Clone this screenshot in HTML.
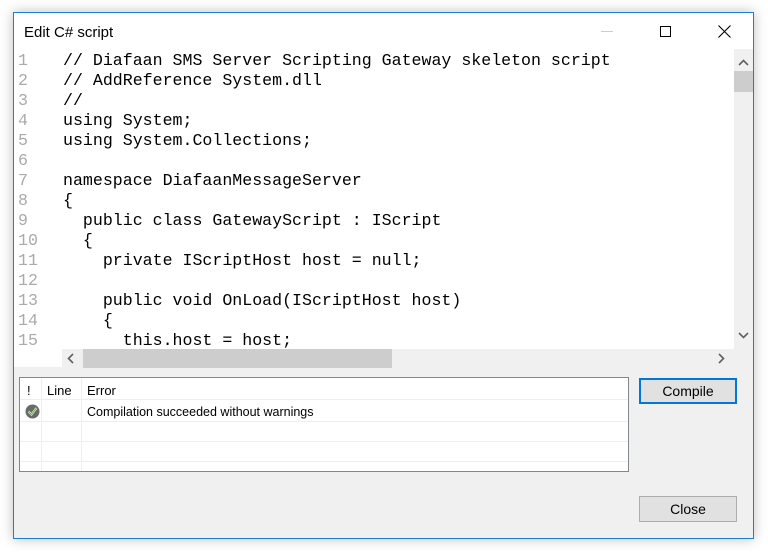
<!DOCTYPE html>
<html><head><style>
*{margin:0;padding:0;box-sizing:border-box}
body{width:768px;height:554px;background:#fff;position:relative;overflow:hidden;font-family:"Liberation Sans",sans-serif}
.win{position:absolute;left:13px;top:12px;width:741px;height:527px;background:#f0f0f0;border:1px solid #1a7fd4;box-shadow:0 0 12px rgba(0,0,0,.25)}
.title{position:absolute;left:0;top:0;width:739px;height:36px;background:#fff}
.title span{position:absolute;left:10px;top:11px;font-size:15px;color:#000}
.ed{position:absolute;left:0;top:36px;width:739px;height:318px;background:#fff;overflow:hidden}
.code{position:absolute;left:0;top:2px;font-family:"Liberation Mono",monospace;font-size:16.6px;line-height:20px;white-space:pre;color:#000}
.ln{position:absolute;left:4px;top:2px;font-family:"Liberation Mono",monospace;font-size:16.6px;line-height:20px;color:#aaa;white-space:pre}
.vs{position:absolute;left:720px;top:36px;width:19px;height:300px;background:#f0f0f0}
.hs{position:absolute;left:48px;top:336px;width:691px;height:19px;background:#f0f0f0}
.grid{position:absolute;left:5px;top:364px;width:610px;height:95px;background:#fff;border:1px solid #828790;font-size:13px}
.btn{position:absolute;left:625px;width:98px;height:26px;background:#e1e1e1;border:1px solid #adadad;font-size:14px;text-align:center;line-height:24px}
</style></head><body>
<div class="win">
<div class="title"><span>Edit C# script</span>
<div style="position:absolute;left:587px;top:18px;width:12px;height:1px;background:#ccc"></div>
<div style="position:absolute;left:646px;top:13px;width:11px;height:11px;border:1px solid #000"></div>
<svg style="position:absolute;left:704px;top:12px" width="13" height="13"><path d="M0.5 0.5L12.5 12.5M12.5 0.5L0.5 12.5" stroke="#000" stroke-width="1.1"/></svg>
</div>
<div class="ed">
<div class="ln">1
2
3
4
5
6
7
8
9
10
11
12
13
14
15</div>
<div class="code" style="left:49px">// Diafaan SMS Server Scripting Gateway skeleton script
// AddReference System.dll
//
using System;
using System.Collections;

namespace DiafaanMessageServer
{
  public class GatewayScript : IScript
  {
    private IScriptHost host = null;

    public void OnLoad(IScriptHost host)
    {
      this.host = host;</div>
</div>
<div class="vs">
<svg style="position:absolute;left:4px;top:10px" width="11" height="7"><path d="M1 6L5.5 1.5L10 6" stroke="#606060" stroke-width="1.6" fill="none"/></svg>
<div style="position:absolute;left:0;top:22px;width:19px;height:21px;background:#cdcdcd"></div>
<svg style="position:absolute;left:4px;top:283px" width="11" height="7"><path d="M1 1L5.5 5.5L10 1" stroke="#606060" stroke-width="1.6" fill="none"/></svg>
</div>
<div class="hs">
<svg style="position:absolute;left:5px;top:4px" width="7" height="11"><path d="M6 1L1.5 5.5L6 10" stroke="#606060" stroke-width="1.6" fill="none"/></svg>
<div style="position:absolute;left:21px;top:0;width:309px;height:19px;background:#cdcdcd"></div>
<svg style="position:absolute;left:656px;top:4px" width="7" height="11"><path d="M1 1L5.5 5.5L1 10" stroke="#606060" stroke-width="1.6" fill="none"/></svg>
</div>
<div class="grid">
<div style="position:absolute;left:0;top:0;width:608px;height:22px;border-bottom:1px solid #eee"></div>
<div style="position:absolute;left:0;top:43px;width:608px;height:1px;background:#eee"></div>
<div style="position:absolute;left:0;top:63px;width:608px;height:1px;background:#eee"></div>
<div style="position:absolute;left:0;top:83px;width:608px;height:1px;background:#eee"></div>
<div style="position:absolute;left:21px;top:0;width:1px;height:93px;background:#eee"></div>
<div style="position:absolute;left:61px;top:0;width:1px;height:93px;background:#eee"></div>
<div style="position:absolute;left:7px;top:5px">!</div>
<div style="position:absolute;left:27px;top:5px">Line</div>
<div style="position:absolute;left:67px;top:5px">Error</div>
<div style="position:absolute;left:67px;top:27px;font-size:12.5px">Compilation succeeded without warnings</div>
<svg style="position:absolute;left:5px;top:26px" width="15" height="15"><circle cx="7.5" cy="7.5" r="7" fill="#6a6a6a"/><path d="M3.5 7.5L6.5 10.5L11.5 4" stroke="#fff" stroke-width="2" fill="none"/><path d="M3.5 7.5L6.5 10.5L11.5 4" stroke="#5cb030" stroke-width="1" fill="none"/></svg>
</div>
<div class="btn" style="top:365px;border:2px solid #0078d7;line-height:22px">Compile</div>
<div class="btn" style="top:483px">Close</div>
</div>
</body></html>
